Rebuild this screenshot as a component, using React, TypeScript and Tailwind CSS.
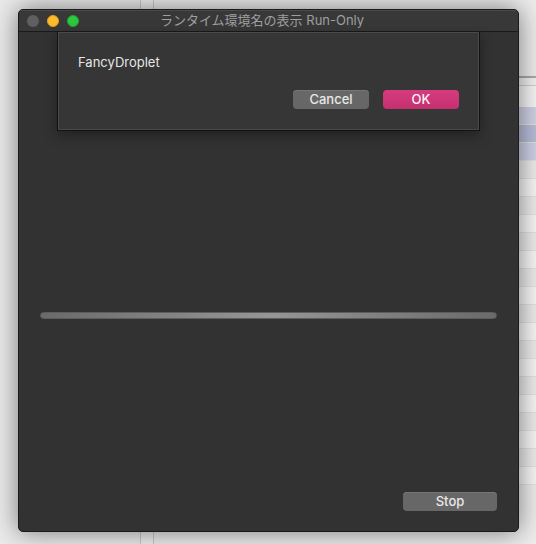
import React from "react";

const sans = { fontFamily: '"Inter", "Noto Sans CJK JP", sans-serif' };

function TrafficLights() {
  return (
    <div className="flex items-center gap-[8px] pl-[8px]">
      <span className="w-[12px] h-[12px] rounded-full bg-[#5f5f5f]" />
      <span className="w-[12px] h-[12px] rounded-full bg-[#fdbc2c] border border-[#dfa023]" />
      <span className="w-[12px] h-[12px] rounded-full bg-[#2cc840] border border-[#20a830]" />
    </div>
  );
}

function Desktop() {
  const rows = [
    "bg-[#cfd2e4]",
    "bg-[#b8bdd8]",
    "bg-[#cdd1e5]",
    "bg-[#ececec]",
    "bg-[#f7f7f7]",
    "bg-[#ececec]",
    "bg-[#f7f7f7]",
    "bg-[#ececec]",
    "bg-[#f7f7f7]",
    "bg-[#ececec]",
    "bg-[#f7f7f7]",
    "bg-[#ececec]",
    "bg-[#f7f7f7]",
    "bg-[#ececec]",
    "bg-[#f7f7f7]",
    "bg-[#ececec]",
    "bg-[#f7f7f7]",
    "bg-[#ececec]",
    "bg-[#f7f7f7]",
    "bg-[#ececec]",
    "bg-[#f7f7f7]",
  ];
  return (
    <div className="absolute inset-0 flex">
      <div className="w-[140px] bg-[#ebebeb]" />
      <div className="w-[14px] border-l border-r border-[#c9c9c9] bg-[#efefef]" />
      <div className="flex-1 bg-[#ededed]" />
      <div className="w-[24px] flex flex-col bg-[#ededed]">
        <div className="h-[76px]" />
        <div className="h-[9px] border-t-2 border-[#a9a9a9] bg-[#f2f2f2]" />
        <div className="h-[22px] border-t border-[#cfcfcf] bg-[#f6f6f6]" />
        {rows.map((c, i) => (
          <div key={i} className={`h-[18px] border-b border-[#e2e2e2] ${c}`} />
        ))}
      </div>
    </div>
  );
}

export default function App() {
  return (
    <div className="relative w-[536px] h-[544px] overflow-hidden bg-[#ebebeb]" style={sans}>
      <Desktop />

      <div className="absolute left-[18px] top-[9px] w-[501px] h-[523px] rounded-[5px] border border-[#1b1b1b] bg-[#323232] shadow-[0_0_26px_rgba(0,0,0,0.5)] flex flex-col overflow-hidden">
        <div className="h-[22px] shrink-0 flex items-center bg-[#383838] border-b border-[#1a1a1a] shadow-[inset_0_1px_0_#4a4a4a] relative">
          <TrafficLights />
          <div className="absolute inset-0 flex items-center justify-center pr-[13px] text-[13px] text-[#9f9f9f]">
            ランタイム環境名の表示 Run-Only
          </div>
        </div>

        <div className="relative flex-1 flex flex-col px-[21px] pt-[280px] pb-[20px]">
          <div className="h-[7px] rounded-full bg-[linear-gradient(90deg,#6a6a6a,#969696_50%,#6a6a6a)] border border-[#5d5d5d]" />
          <div className="flex-1" />
          <div className="flex justify-end">
            <button className="w-[94px] h-[19px] rounded-[4px] bg-[#676767] text-[13px] text-[#e8e8e8] font-medium leading-none shadow-[inset_0_1px_0_#767676]">
              Stop
            </button>
          </div>

          <div className="absolute left-[38px] top-0 w-[423px] h-[99px] bg-[#363636] border border-t-0 border-[#121212] shadow-[inset_0_0_0_1px_#4a4a4a,0_4px_12px_rgba(0,0,0,0.35)] flex flex-col pl-[20px] pr-[20px] pt-[22px]">
            <div className="text-[13px] text-[#e6e6e6] leading-[16px]">FancyDroplet</div>
            <div className="flex justify-end gap-[14px] mt-[20px]">
              <button className="w-[76px] h-[19px] rounded-[4px] bg-[#676767] text-[13px] text-[#e8e8e8] font-medium leading-none shadow-[inset_0_1px_0_#767676]">
                Cancel
              </button>
              <button className="w-[76px] h-[19px] rounded-[4px] bg-[linear-gradient(180deg,#d63b80,#c4306f)] text-[13px] text-[#f4f4f4] font-medium leading-none">
                OK
              </button>
            </div>
          </div>
        </div>
      </div>
    </div>
  );
}
